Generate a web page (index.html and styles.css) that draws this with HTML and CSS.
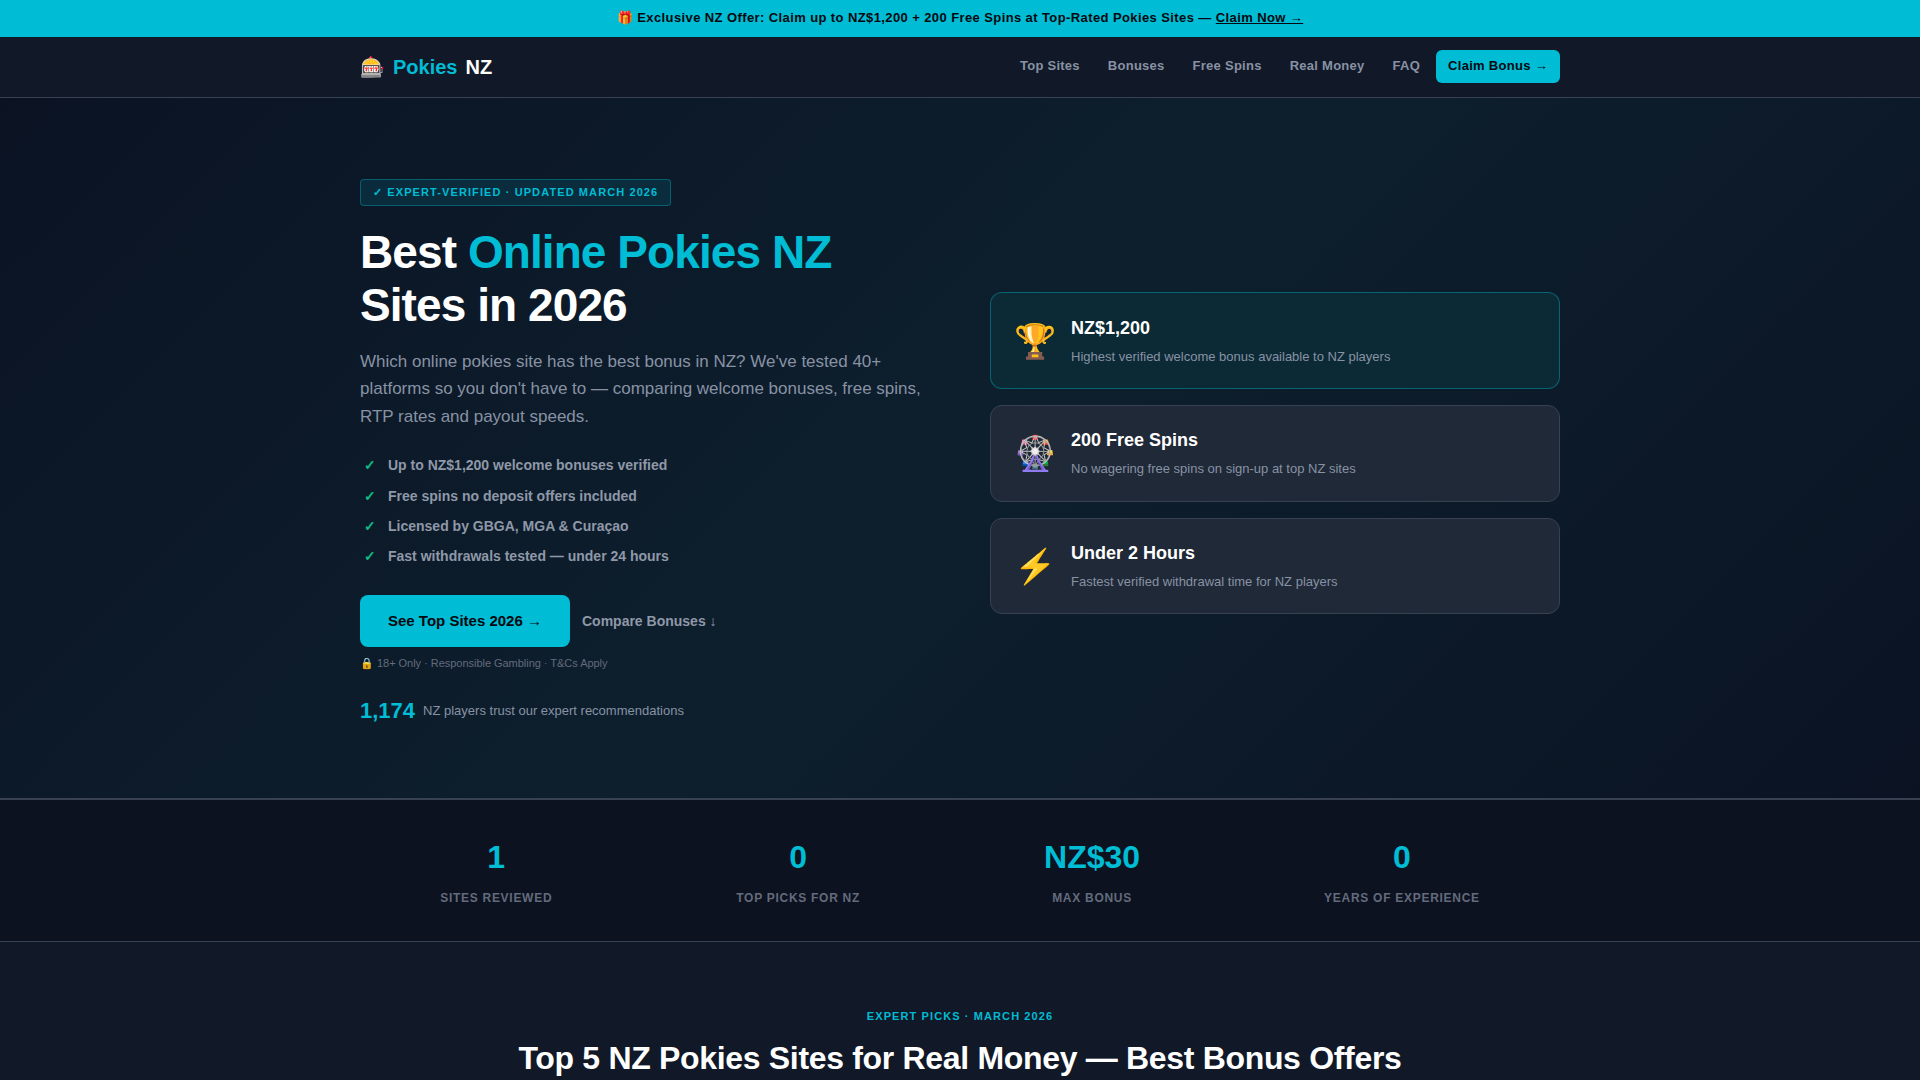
FILE: index.html
```html
<!DOCTYPE html>
<html lang="en">
<head>
<meta charset="utf-8">
<title>Best Online Pokies NZ</title>
<link rel="stylesheet" href="styles.css">
</head>
<body>
<div class="topbar">🎁 Exclusive NZ Offer: Claim up to NZ$1,200 + 200 Free Spins at Top-Rated Pokies Sites — <a href="#">Claim Now →</a></div>
<header class="nav">
  <div class="wrap nav-inner">
    <a class="logo" href="#"><span class="logo-icon">🎰</span><span class="logo-a">Pokies</span><span class="logo-b">NZ</span></a>
    <nav class="menu">
      <a href="#">Top Sites</a>
      <a href="#">Bonuses</a>
      <a href="#">Free Spins</a>
      <a href="#">Real Money</a>
      <a href="#">FAQ</a>
      <a class="menu-cta" href="#">Claim Bonus →</a>
    </nav>
  </div>
</header>
<section class="hero">
  <div class="wrap hero-grid">
    <div class="hero-left">
      <div class="badge">✓ EXPERT-VERIFIED · UPDATED MARCH 2026</div>
      <h1>Best <span>Online Pokies NZ</span> Sites in 2026</h1>
      <p class="lead">Which online pokies site has the best bonus in NZ? We've tested 40+ platforms so you don't have to — comparing welcome bonuses, free spins, RTP rates and payout speeds.</p>
      <ul class="checks">
        <li><i>✓</i>Up to NZ$1,200 welcome bonuses verified</li>
        <li><i>✓</i>Free spins no deposit offers included</li>
        <li><i>✓</i>Licensed by GBGA, MGA &amp; Curaçao</li>
        <li><i>✓</i>Fast withdrawals tested — under 24 hours</li>
      </ul>
      <div class="actions">
        <a class="btn" href="#">See Top Sites 2026 →</a>
        <a class="link" href="#">Compare Bonuses ↓</a>
      </div>
      <p class="note">🔒 18+ Only · Responsible Gambling · T&amp;Cs Apply</p>
      <div class="trust"><strong>1,174</strong><span>NZ players trust our expert recommendations</span></div>
    </div>
    <div class="hero-right">
      <div class="card card-hl"><div class="card-icon">🏆</div><div><h3>NZ$1,200</h3><p>Highest verified welcome bonus available to NZ players</p></div></div>
      <div class="card"><div class="card-icon">🎡</div><div><h3>200 Free Spins</h3><p>No wagering free spins on sign-up at top NZ sites</p></div></div>
      <div class="card"><div class="card-icon">⚡</div><div><h3>Under 2 Hours</h3><p>Fastest verified withdrawal time for NZ players</p></div></div>
    </div>
  </div>
</section>
<section class="stats">
  <div class="wrap stats-row">
    <div class="stat"><b>1</b><span>SITES REVIEWED</span></div>
    <div class="stat"><b>0</b><span>TOP PICKS FOR NZ</span></div>
    <div class="stat"><b>NZ$30</b><span>MAX BONUS</span></div>
    <div class="stat"><b>0</b><span>YEARS OF EXPERIENCE</span></div>
  </div>
</section>
<section class="picks">
  <div class="eyebrow">EXPERT PICKS · MARCH 2026</div>
  <h2>Top 5 NZ Pokies Sites for Real Money — Best Bonus Offers</h2>
</section>
</body>
</html>
```
FILE: styles.css
```css
* { box-sizing: border-box; }
html, body { margin: 0; padding: 0; }
body { background: #111827; color: #fff; font-family: "Liberation Sans", Arial, sans-serif; line-height: 1.6; height: 1080px; overflow: hidden; }
a { text-decoration: none; color: inherit; }
.wrap { width: 1200px; margin: 0 auto; }

.topbar { background: #00bcd4; color: #05080f; text-align: center; font-size: 13px; font-weight: 700; letter-spacing: 0.4px; line-height: 17px; padding: 9px 16px; height: 37px; }
.topbar a { text-decoration: underline; }

.nav { background: #111827; border-bottom: 1px solid #374151; height: 61px; }
.nav-inner { display: flex; align-items: center; justify-content: space-between; height: 60px; }
.logo { display: flex; align-items: center; gap: 8px; font-size: 20px; font-weight: 700; }
.logo-icon { font-size: 20px; }
.logo-a { color: #00bcd4; }
.logo-b { color: #fff; }
.menu { display: flex; align-items: center; gap: 28px; margin-top: -2px; }
.menu a { color: #8892a4; font-size: 13px; font-weight: 600; letter-spacing: 0.26px; line-height: 20px; }
.menu .menu-cta { background: #00bcd4; color: #05080f; font-weight: 700; letter-spacing: 0.3px; padding: 6px 12px 7px; border-radius: 6px; margin-left: -12px; }

.hero { background: linear-gradient(135deg, #0b1323 0%, #0d1f2d 50%, #0b1323 100%); height: 700px; padding-top: 81px; }
.hero-grid { display: grid; grid-template-columns: 570px 570px; column-gap: 60px; align-items: center; }
.badge { display: inline-block; background: rgba(0,188,212,.12); border: 1px solid rgba(0,188,212,.35); color: #00bcd4; font-size: 11px; font-weight: 700; letter-spacing: 1.1px; padding: 4px 12px; border-radius: 4px; line-height: 17px; margin-bottom: 20px; vertical-align: top; }
h1 { margin: 0 0 16px; font-size: 46px; line-height: 1.15; font-weight: 800; letter-spacing: -0.02em; color: #fff; }
h1 span { color: #00bcd4; }
.lead { margin: 0 0 24px; font-size: 17px; line-height: 27.5px; color: #8892a4; }
.checks { list-style: none; margin: 0 0 27px; padding: 0; display: flex; flex-direction: column; gap: 8px; }
.checks li { font-size: 14px; font-weight: 600; color: #8f98a8; display: flex; padding-left: 4px; }
.checks i { font-style: normal; color: #10b981; width: 24px; }
.actions { display: flex; align-items: center; gap: 12px; }
.btn { background: #00bcd4; color: #05080f; font-weight: 700; font-size: 15px; padding: 14px 28px; border-radius: 8px; }
.link { color: #8f98a8; font-size: 14px; font-weight: 600; }
.note { font-size: 11px; letter-spacing: -0.03px; color: #636b7d; margin: 8px 0 0; }
.trust { margin-top: 21px; display: flex; align-items: center; gap: 8px; }
.trust strong { color: #00bcd4; font-size: 22px; font-weight: 800; }
.trust span { color: #8892a4; font-size: 13px; }

.hero-right { display: flex; flex-direction: column; gap: 16px; padding-bottom: 1px; }
.card { display: flex; align-items: center; gap: 15px; background: #1f2937; border: 1px solid #374151; border-radius: 12px; padding: 20.5px 24px 20.6px 23px; }
.card-hl { background: #0c2a36; border-color: rgba(0,188,212,.4); }
.card-icon { font-size: 34px; line-height: 1; width: 42px; flex: none; text-align: center; }
.card h3 { margin: 0 0 4px; font-size: 18px; font-weight: 700; color: #fff; }
.card p { margin: 0; font-size: 13px; color: #8892a4; }

.stats { background: #0c121f; border-top: 2px solid #374151; border-bottom: 1px solid #374151; height: 144px; }
.stats-row { display: flex; justify-content: center; gap: 184px; padding: 37px 0 0; }
.stat { text-align: center; }
.stat b { display: block; font-size: 32px; line-height: 40px; color: #00bcd4; font-weight: 800; margin-bottom: 7px; }
.stat span { font-size: 12px; letter-spacing: 0.72px; color: #636b7d; font-weight: 600; }

.picks { text-align: center; padding-top: 67px; }
.eyebrow { color: #00bcd4; font-size: 11px; font-weight: 700; letter-spacing: 1.1px; line-height: 14px; margin-bottom: 15px; }
h2 { margin: 0; font-size: 32px; line-height: 40px; font-weight: 800; letter-spacing: -0.01em; color: #fff; }
```
